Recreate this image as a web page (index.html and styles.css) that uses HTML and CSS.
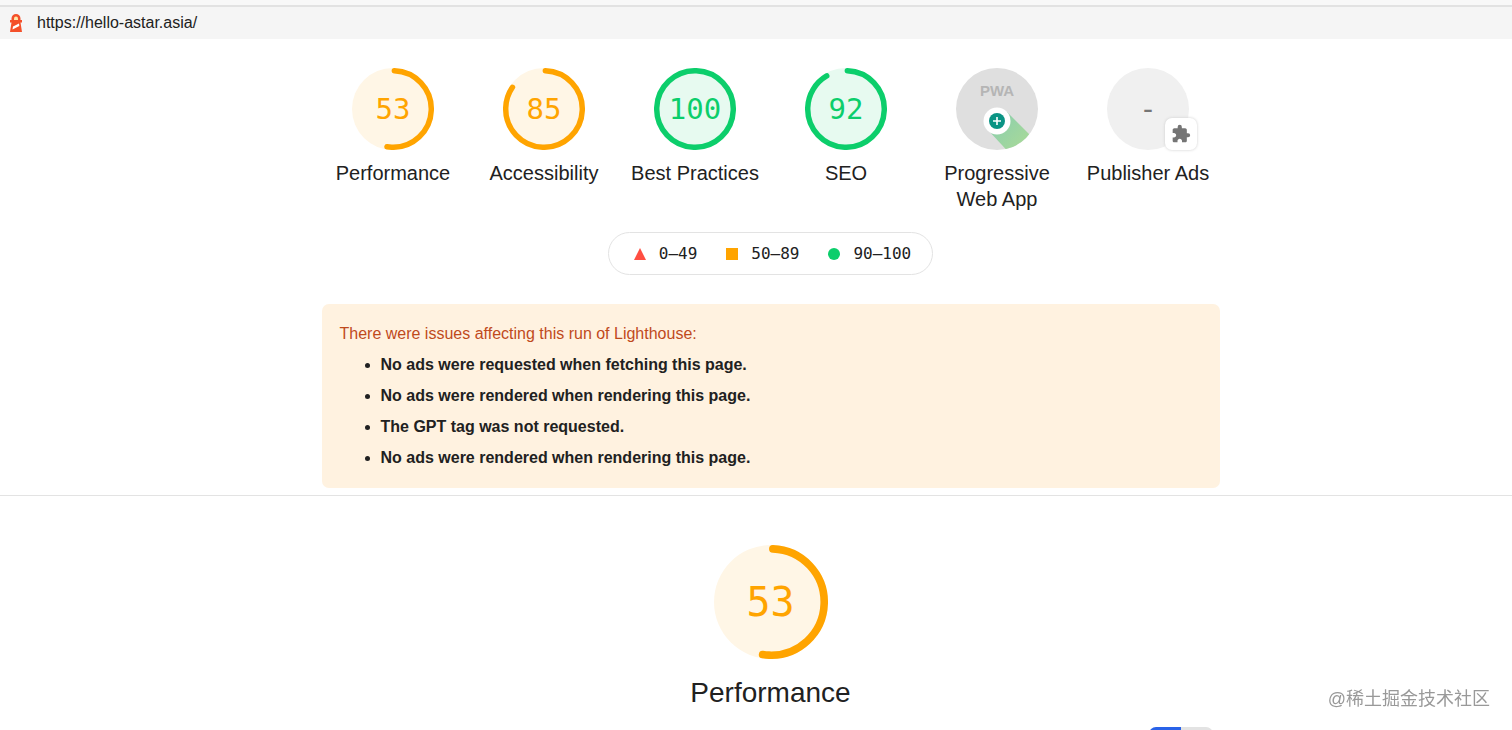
FILE: index.html
```html
<!DOCTYPE html>
<html lang="en">
<head>
    <meta charset="UTF-8">
    <meta name="viewport" content="width=device-width, initial-scale=1.0">
    <title>Lighthouse Report</title>
    <link rel="stylesheet" href="styles.css">
</head>
<body>
    <div class="tabstrip"></div>
    <header class="topbar">
        <svg class="logo" viewBox="0 0 14 20" aria-hidden="true">
            <path d="M2.500 7V5.500a4.500 4.500 0 0 1 9 0V7H13v2.500h-1.500L13 19H1l1.500-9.500H1V7z" fill="#f4502a"/>
            <path d="M5 7V5.500a2 2 0 0 1 4 0V7z" fill="#ffe9a8"/>
            <path d="M4 13.500l6-3 .3 2.500-6.800 3.500z" fill="#fff"/>
        </svg>
        <a class="url" href="https://hello-astar.asia/">https://hello-astar.asia/</a>
    </header>

    <main>
        <section class="scores">
            <div class="gauges">
                <a class="gauge average" href="#performance">
                    <span class="dial">
                        <svg viewBox="0 0 120 120"><circle class="base" cx="60" cy="60" r="60"/><circle class="arc" cx="60" cy="60" r="56" stroke-dasharray="182.600 352"/></svg>
                        <span class="number">53</span>
                    </span>
                    <span class="label">Performance</span>
                </a>
                <a class="gauge average" href="#accessibility">
                    <span class="dial">
                        <svg viewBox="0 0 120 120"><circle class="base" cx="60" cy="60" r="60"/><circle class="arc" cx="60" cy="60" r="56" stroke-dasharray="295.200 352"/></svg>
                        <span class="number">85</span>
                    </span>
                    <span class="label">Accessibility</span>
                </a>
                <a class="gauge pass" href="#best-practices">
                    <span class="dial">
                        <svg viewBox="0 0 120 120"><circle class="base" cx="60" cy="60" r="60"/><circle class="arc" cx="60" cy="60" r="56"/></svg>
                        <span class="number">100</span>
                    </span>
                    <span class="label">Best Practices</span>
                </a>
                <a class="gauge pass" href="#seo">
                    <span class="dial">
                        <svg viewBox="0 0 120 120"><circle class="base" cx="60" cy="60" r="60"/><circle class="arc" cx="60" cy="60" r="56" stroke-dasharray="319.800 352"/></svg>
                        <span class="number">92</span>
                    </span>
                    <span class="label">SEO</span>
                </a>
                <a class="gauge" href="#pwa">
                    <span class="dial">
                        <svg viewBox="0 0 82 82">
                            <defs>
                                <linearGradient id="beam" x1="0" y1="0" x2="1" y2="1">
                                    <stop offset="0" stop-color="#86cdb2"/>
                                    <stop offset="1" stop-color="#b0dc92"/>
                                </linearGradient>
                                <clipPath id="disc"><circle cx="41" cy="41" r="41"/></clipPath>
                            </defs>
                            <circle cx="41" cy="41" r="41" fill="#dfdfdf"/>
                            <path d="M51 44L76 69L66 90H58L32 62z" fill="url(#beam)" clip-path="url(#disc)"/>
                            <text class="pwa-text" x="41" y="28">PWA</text>
                            <circle cx="41" cy="53" r="13.500" fill="#fff"/>
                            <circle cx="41" cy="53" r="8" fill="#0a9484"/>
                            <path d="M41 49v8M37 53h8" stroke="#fff" stroke-width="1.600"/>
                        </svg>
                    </span>
                    <span class="label">Progressive Web App</span>
                </a>
                <a class="gauge none" href="#publisher-ads">
                    <span class="dial">
                        <svg viewBox="0 0 82 82"><circle cx="41" cy="41" r="41" fill="#f0f0f0"/></svg>
                        <span class="number">-</span>
                        <span class="plugin">
                            <svg viewBox="0 0 24 24"><path fill="#757575" d="M20.500 11H19V7c0-1.100-.9-2-2-2h-4V3.500a2.500 2.500 0 0 0-5 0V5H4c-1.100 0-2 .9-2 2v3.800h1.500c1.500 0 2.700 1.200 2.700 2.700S5 16.200 3.500 16.200H2V20c0 1.100.9 2 2 2h3.800v-1.500c0-1.500 1.200-2.700 2.700-2.700s2.700 1.200 2.700 2.700V22H17c1.100 0 2-.9 2-2v-4h1.500a2.500 2.500 0 0 0 0-5z"/></svg>
                        </span>
                    </span>
                    <span class="label">Publisher Ads</span>
                </a>
            </div>

            <div class="legend">
                <span class="range"><svg viewBox="0 0 12 12"><path d="M6 0l6 12H0z" fill="#ff4e42"/></svg>0–49</span>
                <span class="range"><svg viewBox="0 0 12 12"><path d="M0 0h12v12H0z" fill="#ffa400"/></svg>50–89</span>
                <span class="range"><svg viewBox="0 0 12 12"><circle cx="6" cy="6" r="6" fill="#0cce6b"/></svg>90–100</span>
            </div>

            <div class="warnings">
                <p>There were issues affecting this run of Lighthouse:</p>
                <ul>
                    <li>No ads were requested when fetching this page.</li>
                    <li>No ads were rendered when rendering this page.</li>
                    <li>The GPT tag was not requested.</li>
                    <li>No ads were rendered when rendering this page.</li>
                </ul>
            </div>
        </section>

        <section class="category" id="performance">
            <div class="gauge large average">
                <span class="dial">
                    <svg viewBox="0 0 120 120"><circle class="base" cx="60" cy="60" r="60"/><circle class="arc" cx="60" cy="60" r="56" stroke-dasharray="182.600 352"/></svg>
                    <span class="number">53</span>
                </span>
                <h1 class="label">Performance</h1>
            </div>
            <div class="views">
                <button class="view active" type="button" aria-label="Compact view"></button>
                <button class="view" type="button" aria-label="Expanded view"></button>
            </div>
        </section>
    </main>

    <div class="watermark">@稀土掘金技术社区</div>
</body>
</html>
```

FILE: styles.css
```css
* {
    box-sizing: border-box;
}

body {
    margin: 0;
    height: 100vh;
    overflow: hidden;
    background: #fff;
    color: #212121;
    font-family: "Liberation Sans", Arial, sans-serif;
    font-size: 16px;
}

a {
    color: inherit;
    text-decoration: none;
}

.tabstrip {
    height: 7px;
    background: #f8f8f8;
    border-bottom: 2px solid #e2e2e2;
}

.topbar {
    display: flex;
    align-items: center;
    gap: 14px;
    height: 32px;
    padding: 0 9px;
    background: #f5f5f5;
}

.logo {
    width: 14px;
    height: 20px;
}

/* the report column sits slightly right of centre */
main {
    padding-left: 29px;
}

.scores {
    display: flex;
    flex-direction: column;
    align-items: center;
    margin-left: -29px;
    padding: 29px 0 7px 29px;
    border-bottom: 1px solid #e3e3e3;
}

.gauges {
    display: flex;
    justify-content: center;
}

.gauge {
    display: flex;
    flex-direction: column;
    align-items: center;
    gap: 10px;
    width: 151px;
}

.dial {
    position: relative;
    display: flex;
    align-items: center;
    justify-content: center;
    width: 82px;
    height: 82px;
}

.dial > svg {
    position: absolute;
    width: 100%;
    height: 100%;
}

.base {
    fill: #fff6e6;
}

.arc {
    fill: none;
    stroke: #ffa400;
    stroke-width: 8;
    stroke-linecap: round;
    transform: rotate(-88deg);
    transform-origin: 50% 50%;
}

.pass .base {
    fill: #e7faf0;
}

.pass .arc {
    stroke: #0cce6b;
}

.number {
    position: relative;
    font-family: "DejaVu Sans Mono", monospace;
    font-size: 29px;
    line-height: 32px;
    color: #ffa400;
}

.pass .number {
    color: #0cce6b;
}

.none .number {
    color: #757575;
}

.label {
    width: 131px;
    margin: 0;
    font-size: 20px;
    font-weight: normal;
    line-height: 26px;
    text-align: center;
}

.pwa-text {
    fill: #b5b5b5;
    font-size: 15px;
    font-weight: bold;
    text-anchor: middle;
}

.plugin {
    position: absolute;
    right: -8px;
    bottom: 0;
    display: flex;
    align-items: center;
    justify-content: center;
    width: 32px;
    height: 32px;
    background: #fff;
    border-radius: 7px;
    box-shadow: 0 0 3px #ccc;
}

.plugin svg {
    width: 20px;
    height: 20px;
}

.legend {
    display: flex;
    align-items: center;
    gap: 29px;
    height: 43px;
    margin-top: 20px;
    padding: 0 21px 0 25px;
    border: 1px solid #e3e3e3;
    border-radius: 22px;
}

.range {
    display: flex;
    align-items: center;
    gap: 13px;
    font-family: "DejaVu Sans Mono", monospace;
}

.range svg {
    width: 12px;
    height: 12px;
}

.warnings {
    width: 898px;
    max-width: 100%;
    margin-top: 29px;
    padding: 15px 18px;
    background: #fff2e0;
    border-radius: 7px;
}

.warnings p {
    margin: 0;
    line-height: 30px;
    color: #bf4a1c;
}

.warnings ul {
    margin: 0;
    padding-left: 41px;
}

.warnings li {
    font-weight: bold;
    line-height: 31px;
}

.category {
    max-width: 898px;
    margin: 0 auto;
    padding-top: 49px;
}

.large {
    width: auto;
    gap: 16px;
}

.large .dial {
    width: 114px;
    height: 114px;
}

.large .number {
    font-size: 40px;
    line-height: 44px;
}

.large .label {
    width: auto;
    font-size: 28px;
    line-height: 36px;
}

.views {
    display: flex;
    justify-content: flex-end;
    margin-top: 16px;
    padding-right: 7px;
}

.view {
    width: 32px;
    height: 20px;
    padding: 0;
    border: none;
    border-radius: 0 7px 7px 0;
    background: #e3e3e3;
}

.view.active {
    border-radius: 7px 0 0 7px;
    background: #2962e8;
}

.watermark {
    position: fixed;
    right: 22px;
    bottom: 18px;
    font-family: "Liberation Sans", "Noto Sans CJK SC", sans-serif;
    font-size: 18px;
    line-height: 26px;
    color: #999;
}
```
